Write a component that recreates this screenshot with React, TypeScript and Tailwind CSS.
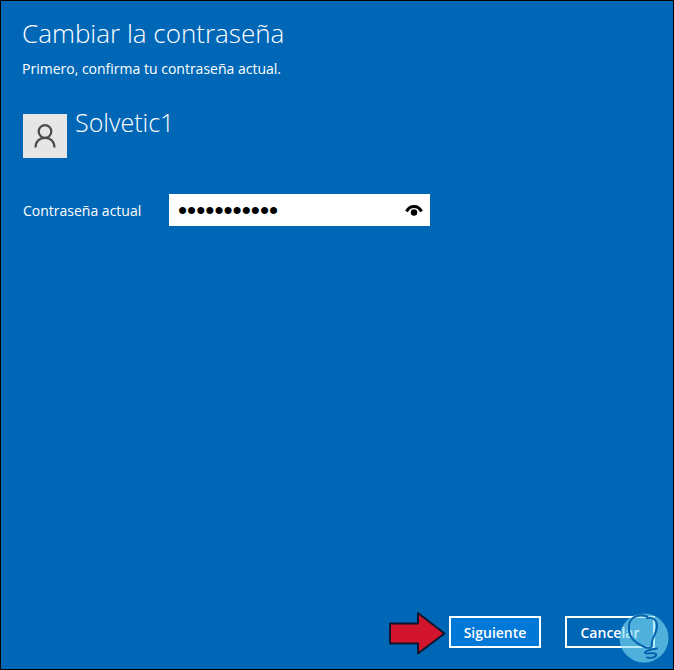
import { useState } from "react";

function UserIcon() {
    return (
        <svg width="24" height="26" viewBox="0 0 24 26" fill="none" stroke="#4a4a4a" strokeWidth="2.2" aria-hidden="true">
            <circle cx="12" cy="8.500" r="6.300"/>
            <path d="M2.500 24.500c0-5.700 3.900-9.700 9.500-9.700s9.500 4 9.500 9.700"/>
        </svg>
    )
}

function EyeIcon() {
    return (
        <svg width="18" height="12" viewBox="0 0 18 12" aria-hidden="true">
            <path d="M1.500 7.500C4.800 .700 13.200 .700 16.500 7.500" fill="none" stroke="#000" strokeWidth="3"/>
            <circle cx="9" cy="8.500" r="3.200" fill="#000"/>
        </svg>
    )
}

function Arrow() {
    return (
        <svg width="58" height="44" viewBox="0 0 58 44" aria-hidden="true">
            <path d="M2 12.500H30V2L56.500 22.500L30 42.500V32.500H2Z" fill="#d2152d" stroke="#0b1730" strokeWidth="2" strokeLinejoin="round"/>
        </svg>
    )
}

function Watermark() {
    return (
        <svg className="pointer-events-none absolute right-1 bottom-1.5" width="50" height="50" viewBox="0 0 50 50" aria-hidden="true">
            <circle cx="25" cy="25" r="24.500" fill="#85e1f5" fillOpacity="0.6"/>
            <g fill="none" stroke="#0863ae" strokeWidth="2" strokeLinecap="round" strokeLinejoin="round">
                <path d="M28 3.500C20 .500 11 4 10 12C9 20 12 26 18 30C22 32 24 34 27 34.500C30 35 33 34.500 33 32.500C31 26 39 20 38 12C37.500 7 34 3.500 28 5"/>
                <path d="M38 35.500C32 36 25 38.500 26 40C27 41.500 36 39 37 41C38 43.500 33 46 28 44.500"/>
            </g>
        </svg>
    )
}

export default function App() {
    const [password, setPassword] = useState("contrasena1");
    const [visible, setVisible] = useState(false);

    return (
        <form
            className="relative flex min-h-screen flex-col border border-black bg-[#0067b7] px-[21px] pt-4 pb-[21px] font-['Open_Sans',sans-serif] text-white"
            onSubmit={(e) => e.preventDefault()}
        >
            <h1 className="text-[26px] leading-8 font-light">Cambiar la contraseña</h1>
            <p className="mt-2 text-sm leading-6">Primero, confirma tu contraseña actual.</p>

            <div className="mt-[33px] ml-px flex gap-2">
                <div className="flex size-11 items-center justify-center bg-[#e6e6e6]">
                    <UserIcon/>
                </div>
                <h2 className="-mt-2 text-[25px] leading-8 font-light">Solvetic1</h2>
            </div>

            <div className="mt-9 ml-px flex items-center">
                <label htmlFor="password" className="w-[146px] pt-px text-sm">Contraseña actual</label>
                <div className="flex h-8 w-[261px] items-center bg-white pr-[7px] text-black">
                    <input
                        id="password"
                        type={visible ? "text" : "password"}
                        className={visible ? "h-8 min-w-0 flex-1 pl-2.5 text-sm outline-none" : "h-8 min-w-0 flex-1 pl-[9px] font-['Liberation_Sans',sans-serif] text-[26px] outline-none"}
                        value={password}
                        onChange={(e) => setPassword(e.target.value)}
                    />
                    <button type="button" aria-label="Mostrar contraseña" onClick={() => setVisible(!visible)}>
                        <EyeIcon/>
                    </button>
                </div>
            </div>

            <div className="mt-auto flex items-center justify-end">
                <div className="-mt-1.5 -mb-2 mr-[3px]">
                    <Arrow/>
                </div>
                <button type="submit" className="mr-6 h-8 w-[92px] border-2 border-white bg-[#0078d7] pt-px text-sm font-semibold">Siguiente</button>
                <button type="button" className="-mr-[3px] h-8 w-[90px] border-2 border-white pt-px text-sm font-semibold">Cancelar</button>
            </div>

            <Watermark/>
        </form>
    )
}
